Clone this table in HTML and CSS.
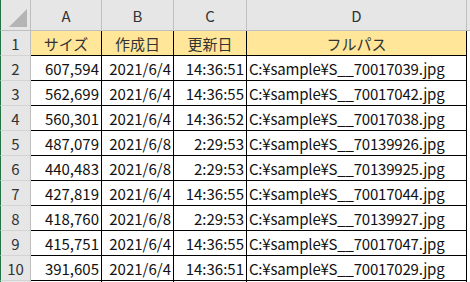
FILE: index.html
```html
<!DOCTYPE html>
<html lang="ja">
<head>
<meta charset="utf-8">
<link rel="stylesheet" href="styles.css">
</head>
<body>
<div class="sheet">
  <div class="corner"><div class="tri"></div></div>
  <div class="colhead">A</div>
  <div class="colhead">B</div>
  <div class="colhead">C</div>
  <div class="colhead">D</div>
  <div class="colhead rest"></div>

  <div class="rowhead">1</div>
  <div class="cell title">サイズ</div>
  <div class="cell title">作成日</div>
  <div class="cell title">更新日</div>
  <div class="cell title">フルパス</div>
  <div class="blank"></div>

  <div class="rowhead">2</div>
  <div class="cell num">607,594</div>
  <div class="cell num">2021/6/4</div>
  <div class="cell num">14:36:51</div>
  <div class="cell path">C:¥sample¥S__70017039.jpg</div>
  <div class="blank"></div>

  <div class="rowhead">3</div>
  <div class="cell num">562,699</div>
  <div class="cell num">2021/6/4</div>
  <div class="cell num">14:36:55</div>
  <div class="cell path">C:¥sample¥S__70017042.jpg</div>
  <div class="blank"></div>

  <div class="rowhead">4</div>
  <div class="cell num">560,301</div>
  <div class="cell num">2021/6/4</div>
  <div class="cell num">14:36:52</div>
  <div class="cell path">C:¥sample¥S__70017038.jpg</div>
  <div class="blank"></div>

  <div class="rowhead">5</div>
  <div class="cell num">487,079</div>
  <div class="cell num">2021/6/8</div>
  <div class="cell num">2:29:53</div>
  <div class="cell path">C:¥sample¥S__70139926.jpg</div>
  <div class="blank"></div>

  <div class="rowhead">6</div>
  <div class="cell num">440,483</div>
  <div class="cell num">2021/6/8</div>
  <div class="cell num">2:29:53</div>
  <div class="cell path">C:¥sample¥S__70139925.jpg</div>
  <div class="blank"></div>

  <div class="rowhead">7</div>
  <div class="cell num">427,819</div>
  <div class="cell num">2021/6/4</div>
  <div class="cell num">14:36:55</div>
  <div class="cell path">C:¥sample¥S__70017044.jpg</div>
  <div class="blank"></div>

  <div class="rowhead">8</div>
  <div class="cell num">418,760</div>
  <div class="cell num">2021/6/8</div>
  <div class="cell num">2:29:53</div>
  <div class="cell path">C:¥sample¥S__70139927.jpg</div>
  <div class="blank"></div>

  <div class="rowhead">9</div>
  <div class="cell num">415,751</div>
  <div class="cell num">2021/6/4</div>
  <div class="cell num">14:36:55</div>
  <div class="cell path">C:¥sample¥S__70017047.jpg</div>
  <div class="blank"></div>

  <div class="rowhead">10</div>
  <div class="cell num">391,605</div>
  <div class="cell num">2021/6/4</div>
  <div class="cell num">14:36:51</div>
  <div class="cell path">C:¥sample¥S__70017029.jpg</div>
  <div class="blank"></div>

  <div class="rowhead tail"></div>
  <div class="cell tail"></div>
  <div class="cell tail"></div>
  <div class="cell tail"></div>
  <div class="cell tail"></div>
  <div class="blank"></div>
</div>
</body>
</html>
```
FILE: styles.css
```css
html, body {
  margin: 0;
  padding: 0;
  background: #ffffff;
  overflow: hidden;
}

.sheet {
  display: grid;
  grid-template-columns: 31px 71px 72px 73px 220px 3px;
  grid-template-rows: 31px repeat(10, 25px) 1px;
  width: 470px;
  height: 282px;
  overflow: hidden;
  font-family: "Noto Sans CJK JP", "Noto Sans", sans-serif;
  font-size: 15px;
  color: #111;
}

.sheet > div {
  box-sizing: border-box;
  display: flex;
  align-items: center;
  white-space: nowrap;
  overflow: hidden;
  line-height: 1;
}

.corner {
  background: #e6e6e6;
  border-left: 1px solid #217346;
  border-right: 1px solid #bfbfbf;
  border-bottom: 1px solid #bfbfbf;
  justify-content: flex-end;
  align-items: flex-end !important;
  padding: 0 3px 3px 0;
}

.tri {
  width: 18px;
  height: 18px;
  background: #b4b4b4;
  clip-path: polygon(100% 0, 100% 100%, 0 100%);
}

.colhead {
  background: #e6e6e6;
  border-right: 1px solid #bfbfbf;
  border-bottom: 1px solid #bfbfbf;
  justify-content: center;
  color: #333;
  padding-top: 1px;
}

.colhead.rest {
  border-right: none;
}

.rowhead {
  background: #e6e6e6;
  border-left: 1px solid #217346;
  border-right: 1px solid #bfbfbf;
  border-bottom: 1px solid #d4d4d4;
  justify-content: center;
  color: #333;
  padding-top: 1px;
}

.cell {
  border-right: 1px solid #000;
  border-bottom: 1px solid #000;
  padding-top: 1px;
}

.tail {
  border-bottom: none;
}

.title {
  background: #ffe699;
  justify-content: center;
  color: #333;
}

.num {
  justify-content: flex-end;
  padding-right: 2px;
}

.path {
  justify-content: flex-start;
  padding-left: 2px;
  letter-spacing: -0.2px;
}

.blank {
  background: #fff;
}
```
